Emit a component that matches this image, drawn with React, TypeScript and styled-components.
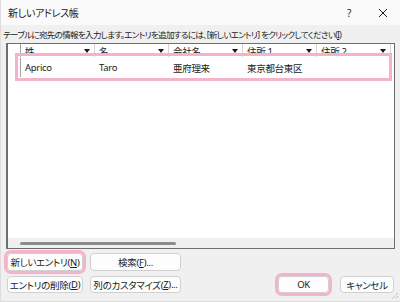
import { Fragment } from 'react';
import styled, { createGlobalStyle } from 'styled-components';

const GlobalStyle = createGlobalStyle`
  * { box-sizing: border-box; }
  body {
    margin: 0;
    background: #f0f0f0;
    font-family: 'Noto Sans', 'Noto Sans CJK JP', sans-serif;
    font-feature-settings: 'palt';
    font-size: 9.5px;
    letter-spacing: -0.3px;
    color: #1a1a1a;
  }
`;

const pink = '#f4b3ca';

const columns = ['姓', '名', '会社名', '住所 1', '住所 2'];
const row = ['Aprico', 'Taro', '亜府理来', '東京都台東区', ''];

const Window = styled.div`
  position: relative;
  width: 400px;
  height: 302px;
  display: flex;
  flex-direction: column;
  background: #f0f0f0;
  border-left: 1px solid #dcdcdc;
  border-bottom: 1px solid #dcdcdc;
`;

const TitleBar = styled.div`
  height: 25px;
  display: flex;
  align-items: center;
  padding-left: 7px;
  background: #fafafa;
  font-size: 10px;
`;

const Title = styled.div`
  flex: 1;
`;

const TitleButton = styled.div`
  width: 34px;
  height: 25px;
  display: flex;
  align-items: center;
  justify-content: center;
  font-size: 10px;
`;

const Instruction = styled.div`
  height: 18px;
  padding-left: 2px;
  display: flex;
  align-items: center;
  white-space: pre;
  font-size: 8.5px;
  letter-spacing: -0.65px;
`;

const U = styled.span`
  text-decoration: underline;
`;

const TableFrame = styled.div`
  position: relative;
  margin: 0 5px;
  height: 206px;
  display: flex;
  flex-direction: column;
  background: #fff;
  border: 1px solid #6e6e6e;
  border-left-width: 2px;
`;

const Grid = styled.div`
  flex: 1;
  display: grid;
  grid-template-columns: 13px repeat(5, 74px);
  grid-auto-rows: min-content;
`;

const HeaderCell = styled.div`
  height: 13px;
  display: flex;
  align-items: center;
  justify-content: space-between;
  padding: 0 4px 0 4px;
  border-right: 1px solid #d6d6d6;
`;

const Arrow = styled.span`
  width: 0;
  height: 0;
  border-left: 3.5px solid transparent;
  border-right: 3.5px solid transparent;
  border-top: 4px solid #1a1a1a;
`;

const Marker = styled.div<{ header?: boolean }>`
  height: ${({ header }) => (header ? '13px' : '19px')};
  border-right: 1px solid #a0a0a0;
  margin-top: ${({ header }) => (header ? '0' : '1px')};
  display: flex;
  justify-content: flex-end;
  padding-right: 3px;
`;

const MarkerLine = styled.span`
  width: 1px;
  height: 12px;
  margin-top: 2px;
  background: #8a8a8a;
`;

const Cell = styled.div`
  height: 19px;
  margin-top: 1px;
  display: flex;
  align-items: center;
  padding-left: 4px;
`;

const ScrollBar = styled.div`
  height: 10px;
  background: #f0f0f0;
  display: flex;
  align-items: center;
  padding-left: 12px;
`;

const Thumb = styled.div`
  width: 156px;
  height: 3px;
  border-radius: 2px;
  background: #8c8c8c;
`;

const RowHighlight = styled.div`
  position: absolute;
  left: 7px;
  top: 9px;
  width: 377px;
  height: 28px;
  border: 3px solid ${pink};
  pointer-events: none;
`;

const Footer = styled.div`
  flex: 1;
  display: flex;
  flex-direction: column;
  gap: 5px;
  padding: 4px 0 0 6px;
`;

const ButtonRow = styled.div`
  display: flex;
  align-items: center;
  gap: 7px;
`;

const Spacer = styled.div`
  flex: 1;
`;

const Button = styled.div<{ w: number; h?: number; marked?: boolean; end?: number }>`
  width: ${({ w }) => w}px;
  height: ${({ h }) => h || 17}px;
  display: flex;
  align-items: center;
  justify-content: center;
  background: #fdfdfd;
  border: 1px solid #d0d0d0;
  border-radius: 4px;
  white-space: nowrap;
  margin-right: ${({ end }) => end || 0}px;
  outline: ${({ marked }) => (marked ? `3px solid ${pink}` : 'none')};
  outline-offset: 0px;
`;

const Grip = styled.svg`
  position: absolute;
  right: 1px;
  bottom: 1px;
`;

export default function App() {
  return (
    <Window>
      <GlobalStyle />
      <TitleBar>
        <Title>新しいアドレス帳</Title>
        <TitleButton>?</TitleButton>
        <TitleButton>
          <svg width="10" height="10" viewBox="0 0 10 10">
            <path d="M1 1 L9 9 M9 1 L1 9" stroke="#1a1a1a" strokeWidth="1" />
          </svg>
        </TitleButton>
      </TitleBar>
      <Instruction>
        {'テーブルに宛先の情報を入力します。エントリを追加するには、[新しいエントリ] をクリックしてください('}
        <U>I</U>)
      </Instruction>
      <TableFrame>
        <Grid>
          <Marker header />
          {columns.map((c) => (
            <HeaderCell key={c}>
              {c}
              <Arrow />
            </HeaderCell>
          ))}
          <Marker>
            <MarkerLine />
          </Marker>
          {row.map((v, i) => (
            <Fragment key={i}>
              <Cell>{v}</Cell>
            </Fragment>
          ))}
        </Grid>
        <ScrollBar>
          <Thumb />
        </ScrollBar>
        <RowHighlight />
      </TableFrame>
      <Footer>
        <ButtonRow>
          <Button w={76} h={18} marked>
            新しいエントリ(<U>N</U>)
          </Button>
          <Button w={91} h={18}>
            検索(<U>F</U>)...
          </Button>
        </ButtonRow>
        <ButtonRow>
          <Button w={76}>
            エントリの削除(<U>D</U>)
          </Button>
          <Button w={91}>
            列のカスタマイズ(<U>Z</U>)...
          </Button>
          <Spacer />
          <Button w={51} marked>
            OK
          </Button>
          <Button w={54} end={6} style={{ marginLeft: 4 }}>
            キャンセル
          </Button>
        </ButtonRow>
      </Footer>
      <Grip width="10" height="10" viewBox="0 0 10 10">
        <path d="M9 3 L3 9 M9 6 L6 9" stroke="#a0a0a0" strokeWidth="1" strokeDasharray="1 1" />
      </Grip>
    </Window>
  );
}
